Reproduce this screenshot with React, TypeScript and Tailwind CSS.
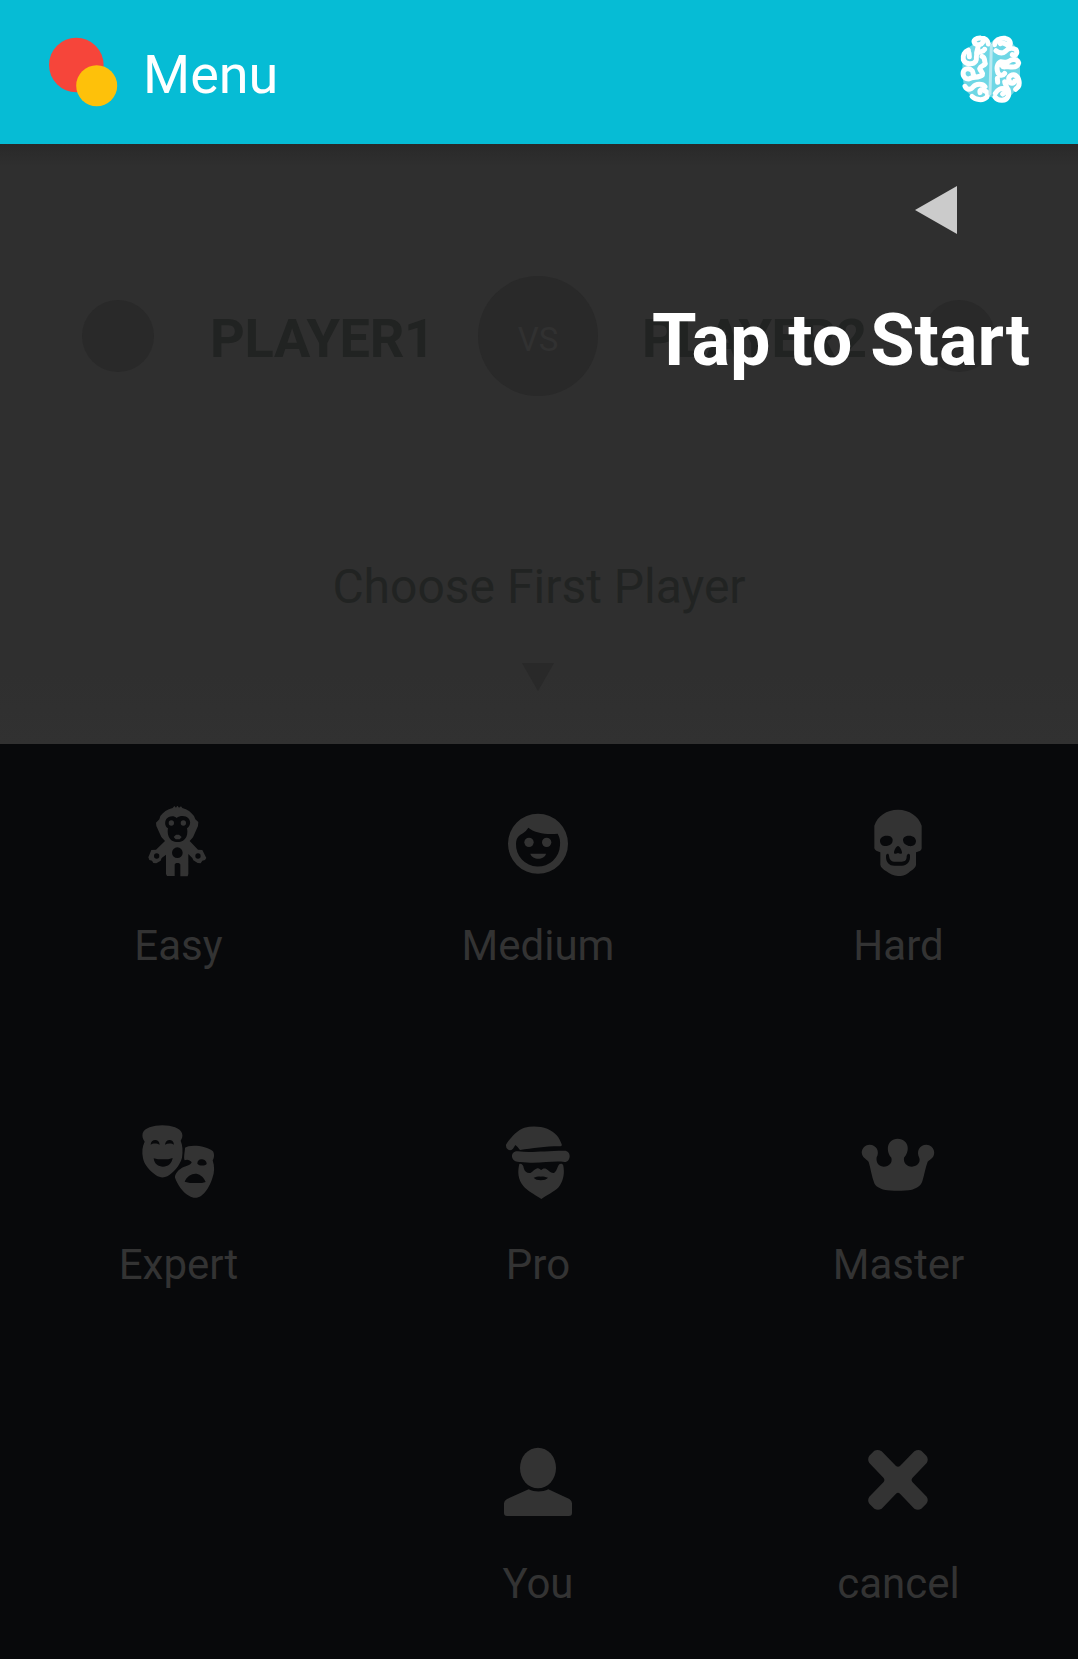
import type { ReactNode } from "react";

const MonkeyIcon = () => (
  <svg viewBox="98 48 216 216" className="h-[72px] w-[72px]" fill="currentColor">
    <path
      fillRule="evenodd"
      d="M187 54L192 48L197 53L201 47L206 53L212 49L216 54C231 58 243 67 251 78L255 88L264 96L263 108L248 142L238 153L263 179L276 180L288 204L284 210L276 212L271 220L262 219L249 211L246 204L234 192V252L232 259H210V224C210 217 193 217 193 224V258H170L167 252V194L154 204L151 212L138 220L129 219L125 212L117 210L114 202L123 180L137 179L164 153L153 141L138 108L137 98L147 88L150 78C158 67 171 58 187 54ZM199 84C191 75 174 78 168 87C161 98 165 110 173 115C170 130 174 145 185 152C195 157 209 157 218 152C230 145 233 130 230 115C240 108 243 95 234 85C226 76 209 76 199 84Z"
    />
    <circle cx="183" cy="99" r="8" />
    <circle cx="219" cy="99" r="8" />
    <path d="M190 141L197 134H206L214 141L208 148H196Z" />
    <g fill="#08090b">
      <circle cx="201" cy="188" r="16" />
      <circle cx="139" cy="198" r="8" />
      <circle cx="263" cy="198" r="8" />
    </g>
  </svg>
);

const FaceIcon = () => (
  <svg viewBox="156 48 216 216" className="h-[72px] w-[72px]" fill="currentColor">
    <path
      fillRule="evenodd"
      d="M264 71a90 90 0 1 0 0 180a90 90 0 0 0 0-180ZM235 113C256 130 290 134 323 131C330 143 331 154 330 166A66 66 0 0 1 198 161C199 142 208 136 219 130Q228 124 235 113Z"
    />
    <circle cx="237" cy="157" r="14" />
    <circle cx="290" cy="157" r="14" />
    <path d="M241 191H288C283 211 247 211 241 191Z" />
  </svg>
);

const SkullIcon = () => (
  <svg viewBox="99 48 216 216" className="h-[72px] w-[72px]" fill="currentColor">
    <path
      fillRule="evenodd"
      d="M204 59C238 60 265 77 275 107V175C274 183 267 184 258 187V225C255 237 244 241 236 248C225 256 216 258 204 258C190 258 179 252 169 244C160 238 152 232 151 224V187C142 184 134 181 133 175V107C143 77 169 60 204 59ZM170 137C157 137 149 145 150 154C152 168 163 170 173 167C183 165 188 160 188 150C188 141 180 137 170 137ZM237 137C226 137 219 142 219 151C220 161 227 165 236 168C248 170 257 166 258 154C258 144 250 137 237 137ZM204 168C199 168 192 181 192 188C193 193 199 192 204 189C209 192 215 193 216 188C216 181 209 168 204 168ZM168 197C167 217 178 227 193 227H216C230 227 242 216 240 196C238 188 231 191 230 199C230 212 225 214 215 215H192C183 214 178 208 177 197C176 188 169 190 168 197Z"
    />
  </svg>
);

const MasksIcon = () => (
  <svg viewBox="98 45 216 216" className="h-[72px] w-[72px] overflow-visible" fill="currentColor">
    <path
      fillRule="evenodd"
      d="M97 70C105 38 206 37 215 70C218 80 215 86 211 92C217 106 218 123 215 143C209 167 187 190 171 199C160 204 148 203 137 196C119 184 101 163 98 145C94 125 96 109 103 95C97 87 95 79 97 70ZM121 104C127 99 140 99 148 104C147 94 141 90 135 90C127 90 121 96 121 104ZM164 104C172 99 184 99 191 104C190 94 184 90 178 90C170 90 165 96 164 104ZM130 145C132 162 144 170 158 170C173 170 184 161 187 144L174 148H143Z"
    />
    <path
      fillRule="evenodd"
      d="M224 113C237 102 289 106 308 124C312 131 313 143 307 151C313 168 313 188 306 205C298 230 286 248 272 258C262 265 247 265 237 258C217 247 202 224 194 203C193 190 207 177 220 171C232 168 242 164 244 157C239 150 231 147 223 151C219 142 224 124 224 113ZM261 161C266 168 283 169 289 162C289 152 280 148 273 148C266 148 261 153 261 161ZM223 215L239 219H275L286 216C279 198 265 191 255 191C243 191 229 199 223 215Z"
    />
  </svg>
);

const SantaIcon = () => (
  <svg viewBox="66 45 216 216" className="h-[72px] w-[72px] overflow-visible" fill="currentColor">
    <path d="M78 104C86 90 110 60 133 53C169 43 213 53 230 76C238 85 242 94 246 106L242 109C205 108 158 115 120 120L112 110L106 105L99 116Q91 125 83 118Q77 112 78 104Z" />
    <path d="M114 124C155 129 193 122 252 122C275 121 274 155 254 156C214 151 180 163 120 156C90 158 88 122 114 124Z" />
    <path
      fillRule="evenodd"
      d="M118 162C125 160 130 166 131 173C134 185 141 190 151 189C158 187 163 177 172 175C178 174 181 180 184 180C187 176 193 174 199 177C207 182 211 190 221 189C230 185 231 174 236 165C240 160 248 160 250 167C254 189 251 207 240 226C230 242 208 251 184 267C163 253 141 242 130 228C114 208 112 187 118 162ZM161 203C168 213 197 213 204 203C193 200 187 199 183 200C178 198 170 200 161 203Z"
    />
  </svg>
);

const CrownIcon = () => (
  <svg viewBox="129 45 216 216" className="h-[72px] w-[72px] overflow-visible" fill="currentColor">
    <path d="M149 104C169 104 180 124 170 142C168 153 172 169 191 170C208 169 218 158 214 143C198 125 198 88 233 86C269 88 270 125 252 143C250 158 259 169 276 170C292 169 302 157 298 144C288 124 298 104 319 104C344 105 348 133 337 143C331 148 327 151 323 155C316 174 313 194 307 214C303 227 291 235 276 239C250 243 216 243 192 239C178 236 166 228 163 220C155 200 152 175 146 156C141 149 129 144 126 133C122 118 134 104 149 104Z" />
  </svg>
);

const UserIcon = () => (
  <svg viewBox="66 42 216 216" className="h-[72px] w-[72px] overflow-visible" fill="currentColor">
    <ellipse cx="174" cy="114" rx="54" ry="61" />
    <path d="M146 178C164 187 187 187 205 178L268 207Q276 212 276 220V249Q276 258 267 258H81Q72 258 72 249V220Q72 212 81 207Z" />
  </svg>
);

const CrossIcon = () => (
  <svg viewBox="1149 42 216 216" className="h-[72px] w-[72px]" fill="currentColor">
    <path d="M1183 62Q1194 57 1205 64L1248 108Q1254 113 1260 108L1303 64Q1314 57 1324 62L1339 77Q1347 88 1340 99L1297 144Q1292 150 1297 156L1340 200Q1347 211 1339 221L1324 236Q1314 242 1303 236L1260 191Q1254 185 1248 191L1205 236Q1194 242 1183 236L1168 221Q1161 211 1168 200L1211 156Q1216 150 1211 144L1168 99Q1161 88 1168 77Z" />
  </svg>
);

const BrainIcon = () => (
  <svg viewBox="174 69 198 216" className="h-[72px] w-[66px]" fill="none" strokeLinecap="round" strokeLinejoin="round">
    <path
      d="M226 83H255L272 98L290 82H320L354 118V145L360 160V220L345 243L325 266L300 276L272 260L240 276L217 262L194 238L188 205L187 180L188 145L194 120L217 105Z"
      fill="#6fd7e5"
    />
    <g stroke="#ffffff" strokeWidth="15">
      <path d="M248 97C244 105 232 107 225 101C217 91 229 83 243 84C256 84 264 91 265 102" />
      <path d="M205 120C193 124 188 137 190 149C196 163 218 166 227 154C233 145 225 138 232 130C239 123 250 126 254 118" />
      <path d="M208 140L207 129M234 112L230 128M246 139C257 143 252 154 256 161C251 169 242 166 239 176C243 187 250 186 247 195C236 204 217 200 207 207C194 207 187 197 190 185C193 176 207 173 214 180C221 183 217 190 221 194" />
      <path d="M195 229C200 241 213 240 220 230C227 221 248 220 255 230M216 259C225 269 248 274 260 262C266 253 262 244 254 243C249 235 238 239 240 248" />
      <path d="M284 104C285 91 300 83 316 85C332 88 334 102 327 109C319 104 311 94 301 101M288 122C297 129 307 132 316 124C323 116 336 112 348 119C354 130 347 138 337 134" />
      <path d="M294 189C288 174 292 159 303 155C314 155 318 161 327 154C337 144 353 148 356 159C353 172 337 172 326 170C316 169 310 175 306 167M294 189C299 197 309 198 314 190M292 205L293 217" />
      <path d="M344 213C341 222 331 222 329 214C322 204 329 195 341 194C356 196 361 218 355 230L347 238M314 215C315 226 325 231 320 243L308 252M286 250C292 239 304 234 310 236M285 261C296 276 318 273 324 260C328 252 326 244 324 238" />
    </g>
    <path d="M274 106L270 252" stroke="#b9eaf1" strokeWidth="9" />
  </svg>
);

type Choice = { label: string; icon: ReactNode };

const choices: (Choice | null)[] = [
  { label: "Easy", icon: <MonkeyIcon /> },
  { label: "Medium", icon: <FaceIcon /> },
  { label: "Hard", icon: <SkullIcon /> },
  { label: "Expert", icon: <MasksIcon /> },
  { label: "Pro", icon: <SantaIcon /> },
  { label: "Master", icon: <CrownIcon /> },
  null,
  { label: "You", icon: <UserIcon /> },
  { label: "cancel", icon: <CrossIcon /> },
];

export default function App() {
  return (
    <div className="flex h-[1659px] w-[1078px] flex-col overflow-hidden bg-[#08090b] font-[Roboto,sans-serif]">
      <header className="flex h-36 shrink-0 items-center justify-between bg-[#06bcd5] pr-[54px] pl-[49px]">
        <div className="flex items-center">
          <svg viewBox="0 0 69 70" className="h-[70px] w-[69px]">
            <circle cx="27.3" cy="28" r="27.3" fill="#f6453a" />
            <circle cx="47.7" cy="48.7" r="20.5" fill="#fec10a" />
          </svg>
          <h1 className="ml-[25px] pt-1.5 text-[54px] leading-[64px] text-white">Menu</h1>
        </div>
        <div className="-mt-[6px]">
          <BrainIcon />
        </div>
      </header>

      <section className="relative h-[600px] shrink-0 bg-[linear-gradient(to_bottom,#292929_0px,#2f2f2f_22px,#2f2f2f_530px,#313131_600px)] pt-[132px] text-[#212322]">
        <div className="flex h-[120px] items-center">
          <div className="ml-[82px] h-[72px] w-[72px] shrink-0 rounded-full bg-[#292929]" />
          <div className="ml-[56px] w-[268px] shrink-0 pt-1.5 text-[54px] leading-[64px] font-bold tracking-[-0.3px]">PLAYER1</div>
          <div className="flex h-[120px] w-[120px] shrink-0 items-center justify-center rounded-full bg-[#292929] pt-2 text-[33px] text-[#313131]">
            VS
          </div>
          <div className="ml-[44px] w-[281px] shrink-0 pt-1.5 text-[54px] leading-[64px] font-bold tracking-[-0.3px]">PLAYER2</div>
          <div className="h-[72px] w-[72px] shrink-0 rounded-full bg-[#292929]" />
        </div>
        <div className="mt-[161px] text-center text-[48px] leading-[60px]">Choose First Player</div>
        <svg viewBox="0 0 32 28" className="ml-[522px] mt-[46px] h-7 w-8" fill="#292929">
          <path d="M0 0H32L16 28Z" />
        </svg>
        <div className="absolute top-[42px] right-[48px] flex flex-col items-end text-white">
          <svg viewBox="0 0 42 48" className="mr-[73px] h-12 w-[42px]" fill="#cbcbcb">
            <path d="M0 24L42 0V48Z" />
          </svg>
          <div className="mt-[64px] text-[72px] leading-[86px] font-bold whitespace-nowrap">Tap to Start</div>
        </div>
      </section>

      <section className="grid shrink-0 grid-cols-[357px_362px_359px] pt-[62px] text-[#333333]">
        {choices.map((choice, index) => (
          <div key={index} className="flex h-[319px] flex-col items-center">
            {choice && (
              <>
                {choice.icon}
                <span className="mt-[43px] text-[42px] leading-[50px]">{choice.label}</span>
              </>
            )}
          </div>
        ))}
      </section>
    </div>
  );
}
